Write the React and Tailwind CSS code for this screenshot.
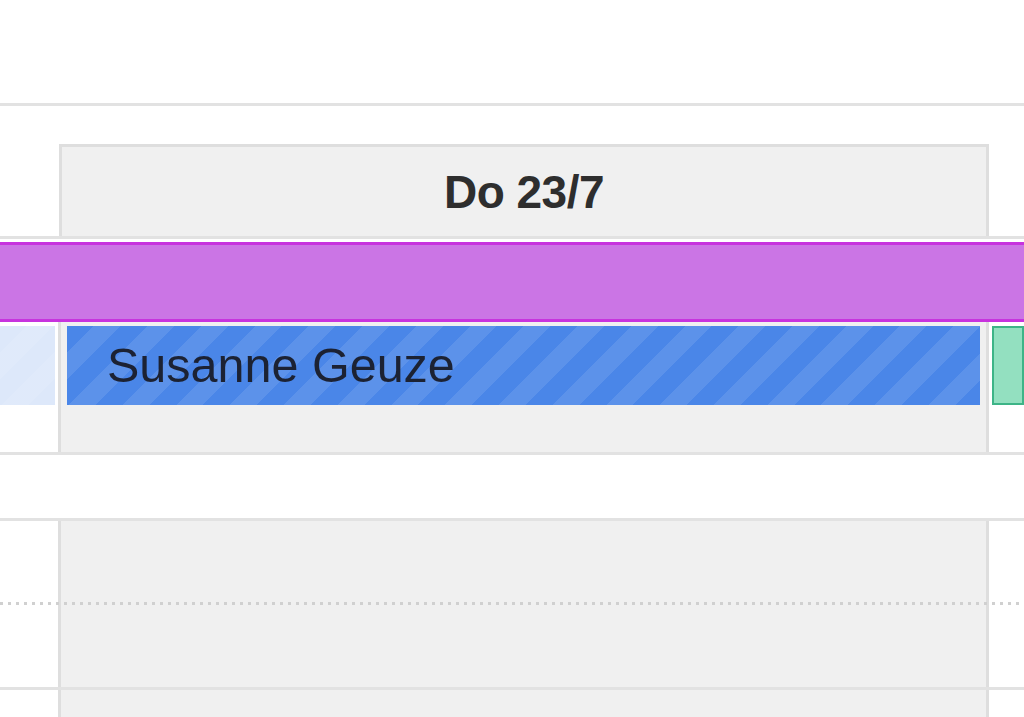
const stripes =
  "bg-[repeating-linear-gradient(135deg,rgba(255,255,255,0)_0_19px,rgba(255,255,255,0.1)_19px_38px)]";

const HLine = () => <div className="h-[3px] w-full bg-[#e2e2e2]" />;

// one row of the day grid: left gutter, the day column, the next day
const DayRow = ({ height, left, middle, right, dotted }) => (
  <div className="relative flex w-full" style={{ height }}>
    <div className="w-[58px] shrink-0 bg-white">{left}</div>
    <div className="w-[931px] shrink-0 border-x-[3px] border-[#dedede] bg-[#f0f0f0]">
      {middle}
    </div>
    <div className="flex-1 bg-white">{right}</div>
    {/* the half-hour line crosses every column */}
    {dotted && (
      <div className="pointer-events-none absolute inset-x-0 top-[81px] h-[3px] bg-[repeating-linear-gradient(90deg,#d0d0d0_0_3px,transparent_3px_8px)]" />
    )}
  </div>
);

export default function App() {
  return (
    <div
      className="h-[717px] w-[1024px] overflow-hidden bg-white text-[#333]"
      style={{ fontFamily: '"Liberation Sans", Arial, sans-serif' }}
    >
      <div className="h-[103px]" />
      <HLine />

      {/* header */}
      <div className="flex h-[130px] items-end">
        <div className="w-[59px] shrink-0" />
        <div className="flex h-[92px] w-[930px] items-center justify-center border-x-[3px] border-t-[3px] border-[#dedede] bg-[#f0f0f0]">
          <span className="text-[46px] font-bold leading-none tracking-[-0.5px] text-[#2e2e2e]">
            Do 23/7
          </span>
        </div>
      </div>
      <HLine />
      <div className="h-[3px]" />

      {/* all-day bar */}
      <div className="h-[80px] w-full border-y-[3px] border-[#c733de] bg-[#cb75e5]" />

      {/* events row */}
      <DayRow
        height={130}
        left={
          <div className={`mt-[4px] h-[79px] w-[55px] bg-[#dde8fa] ${stripes}`} />
        }
        middle={
          <div className="px-[6px] pt-[4px]">
            <div
              className={`flex h-[79px] items-center bg-[#4a86e8] pl-[40px] ${stripes}`}
            >
              <span className="text-[48.5px] leading-none text-[#1c2233]">
                Susanne Geuze
              </span>
            </div>
          </div>
        }
        right={
          <div className="ml-[3px] mt-[4px] h-[79px] border-2 border-[#3db487] bg-[#93e0c0]" />
        }
      />
      <HLine />
      <div className="h-[63px] bg-white" />
      <HLine />

      {/* hour row with half-hour dotted line */}
      <DayRow height={166} dotted />
      <HLine />
      <DayRow height={40} />
    </div>
  );
}
